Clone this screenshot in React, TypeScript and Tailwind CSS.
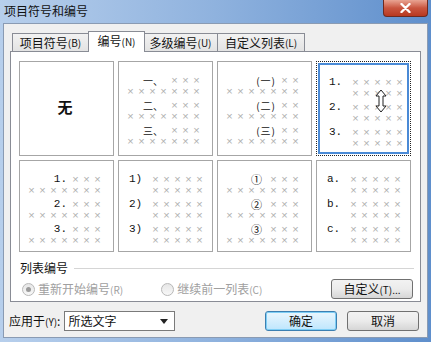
import React from 'react'

const UI = { fontFamily: '"Noto Sans CJK SC", "Noto Sans", sans-serif' }
const MONO = { fontFamily: '"Liberation Mono", "Noto Sans CJK SC", monospace' }
const XF = { fontFamily: '"Liberation Sans", sans-serif' }

function Xs({ n }: { n: number }) {
  return (
    <span className="flex">
      {Array.from({ length: n }).map((_, i) => (
        <span key={i} className="inline-block w-[11px] text-center text-[11px] leading-[11px] text-[#b0b0b0]" style={XF}>
          ×
        </span>
      ))}
    </span>
  )
}

// 标签在右侧靠着 ×××，下一行 7 个 ×
function RightCell({ labels, n = 3, gap = 3, cls = 'text-[11px]', font = MONO }: { labels: string[]; n?: number; gap?: number; cls?: string; font?: React.CSSProperties }) {
  return (
    <div className="flex h-full flex-col items-end gap-[3px] pr-[10px] pt-[13px]">
      {labels.map((l) => (
        <div key={l} className="flex flex-col items-end">
          <div className="flex h-[11px] items-center">
            <span className={`${cls} leading-[11px] text-[#111]`} style={{ ...font, marginRight: gap }}>{l}</span>
            <Xs n={n} />
          </div>
          <div className="flex h-[11px] items-center">
            <Xs n={7} />
          </div>
        </div>
      ))}
    </div>
  )
}

// 标签在左，× 两行
function LeftCell({ labels, lw = 21 }: { labels: string[]; lw?: number }) {
  return (
    <div className="flex h-full flex-col gap-[3px] pl-[10px] pt-[13px]">
      {labels.map((l) => (
        <div key={l} className="flex">
          <span className="text-[11px] leading-[11px] text-[#111]" style={{ ...MONO, width: lw }}>{l}</span>
          <div className="flex flex-col">
            <div className="flex h-[11px] items-center"><Xs n={5} /></div>
            <div className="flex h-[11px] items-center"><Xs n={5} /></div>
          </div>
        </div>
      ))}
    </div>
  )
}

function Cell({ children, selected, h }: { children: React.ReactNode; selected?: boolean; h: number }) {
  if (selected) {
    return (
      <div className="border border-dotted border-[#222] p-px" style={{ height: h }}>
        <div className="relative h-full border-2 border-[#4a8ad6] bg-white">
          <div className="-mt-[1px] -ml-[1px] h-full">{children}</div>
          {/* 光标 */}
          <svg className="absolute left-[55px] top-[24px]" width="12" height="24" viewBox="0 0 12 24">
            <path d="M6 1 L11 7 L8 7 L8 17 L11 17 L6 23 L1 17 L4 17 L4 7 L1 7 Z" fill="white" stroke="#222" strokeWidth="1" />
          </svg>
        </div>
      </div>
    )
  }
  return (
    <div className="border border-[#a6a6a6] bg-white" style={{ height: h }}>
      {children}
    </div>
  )
}

function Radio({ checked }: { checked?: boolean }) {
  return (
    <span className="flex h-[13px] w-[13px] items-center justify-center rounded-full border border-[#b8b8b8] bg-gradient-to-b from-[#e6e6e6] to-[#f8f8f8]">
      {checked && <span className="h-[5px] w-[5px] rounded-full bg-[#9a9a9a]" />}
    </span>
  )
}

function Btn({ children, def, w }: { children: React.ReactNode; def?: boolean; w: number }) {
  return (
    <div
      className={`flex h-[20px] items-center justify-center rounded-[3px] border text-[12px] text-[#111] ${
        def
          ? 'border-[#3c7fb1] bg-gradient-to-b from-[#eaf6fd] to-[#bee6fd] shadow-[inset_0_0_0_1px_#7ecef5]'
          : 'border-[#707070] bg-gradient-to-b from-[#f2f2f2] via-[#ebebeb] to-[#d6d6d6]'
      }`}
      style={{ ...UI, width: w }}
    >
      {children}
    </div>
  )
}

const TABS = [
  { t: '项目符号', k: '(B)', w: 77 },
  { t: '编号', k: '(N)', w: 57, active: true },
  { t: '多级编号', k: '(U)', w: 75 },
  { t: '自定义列表', k: '(L)', w: 88 },
]

export default function App() {
  return (
    <div className="flex h-[342px] w-[431px] flex-col bg-gradient-to-r from-[#b7cfec] via-[#8fb2de] to-[#5f8fcc]" style={UI}>
      {/* 标题栏 */}
      <div className="flex h-[23px] shrink-0 items-start justify-between">
        <span className="pl-[4px] pt-[3px] text-[12px] leading-[16px] text-[#111]">项目符号和编号</span>
        <div className="mr-[3px] flex h-[17px] w-[45px] items-center justify-center rounded-b-[4px] border border-t-0 border-[#6d2a20] bg-gradient-to-b from-[#e8a493] via-[#c9553f] to-[#b8381f]">
          <svg width="11" height="10" viewBox="0 0 11 10">
            <path d="M1.5 1 L9.5 9 M9.5 1 L1.5 9" stroke="white" strokeWidth="2.4" strokeLinecap="round" />
          </svg>
        </div>
      </div>

      {/* 内容区 */}
      <div className="mx-[3px] mb-[4px] flex flex-1 flex-col border border-[#8a9bb3] bg-[#f0f0f0] px-[6px]">
        {/* 页签 */}
        <div className="mt-[7px] flex h-[20px] items-end pl-[2px]">
          {TABS.map((tab) => (
            <div
              key={tab.t}
              className={`relative flex items-center justify-center border border-b-0 border-[#898c95] text-[12px] text-[#111] ${
                tab.active
                  ? 'z-10 -mx-px -mb-px h-[21px] bg-white pb-[2px]'
                  : 'h-[18px] bg-gradient-to-b from-[#f2f2f2] to-[#e3e3e3] [&:not(:first-child)]:-ml-px'
              }`}
              style={{ width: tab.w }}
            >
              {tab.t}
              <span className="text-[10px]">{tab.k}</span>
            </div>
          ))}
        </div>

        {/* 页签面板 */}
        <div className="flex h-[251px] flex-col border border-[#898c95] bg-white">
          <div className="grid grid-cols-[95px_95px_95px_95px] gap-[4px] pl-[8px] pt-[9px]">
            <Cell h={95}>
              <div className="flex h-full items-center justify-center pr-[3px] pb-[2px] text-[15px] font-bold text-[#111]">无</div>
            </Cell>
            <Cell h={95}>
              <RightCell labels={['一、', '二、', '三、']} gap={6} cls="text-[10px]" font={UI} />
            </Cell>
            <Cell h={95}>
              <RightCell labels={['(一)', '(二)', '(三)']} n={2} gap={3} cls="text-[10px] tracking-[1px]" font={UI} />
            </Cell>
            <Cell h={95} selected>
              <LeftCell labels={['1.', '2.', '3.']} />
            </Cell>

            <Cell h={92}>
              <RightCell labels={['1.', '2.', '3.']} />
            </Cell>
            <Cell h={92}>
              <LeftCell labels={['1)', '2)', '3)']} />
            </Cell>
            <Cell h={92}>
              <RightCell labels={['①', '②', '③']} gap={6} cls="text-[11px]" font={UI} />
            </Cell>
            <Cell h={92}>
              <LeftCell labels={['a.', 'b.', 'c.']} />
            </Cell>
          </div>

          {/* 列表编号 */}
          <div className="mt-[8px] flex items-center pl-[9px] pr-[6px]">
            <span className="text-[12px] leading-[16px] text-[#111]">列表编号</span>
            <div className="ml-[6px] h-px flex-1 bg-[#d5d5d5]" />
          </div>
          <div className="mt-[3px] flex items-center pl-[11px] pr-[7px]">
            <Radio checked />
            <span className="ml-[3px] text-[12px] text-[#a0a0a0]">
              重新开始编号<span className="text-[10px]">(R)</span>
            </span>
            <span className="ml-[38px]"><Radio /></span>
            <span className="ml-[3px] text-[12px] text-[#a0a0a0]">
              继续前一列表<span className="text-[10px]">(C)</span>
            </span>
            <div className="ml-auto">
              <Btn w={82}>
                自定义<span className="text-[10px]">(T)...</span>
              </Btn>
            </div>
          </div>
        </div>

        {/* 底部 */}
        <div className="mt-[9px] flex items-center">
          <span className="ml-[-1px] text-[12px] text-[#111]">
            应用于<span className="text-[10px]">(Y)</span>:
          </span>
          <div className="ml-[4px] flex h-[20px] w-[111px] items-center justify-between border border-[#7a7a7a] bg-white pl-[3px] pr-[6px] text-[12px] text-[#111]">
            所选文字
            <svg width="8" height="5" viewBox="0 0 8 5">
              <path d="M0 0 H8 L4 5 Z" fill="#222" />
            </svg>
          </div>
          <div className="ml-auto flex gap-[10px] pr-[2px]">
            <Btn w={72} def>确定</Btn>
            <Btn w={72}>取消</Btn>
          </div>
        </div>
      </div>
    </div>
  )
}
